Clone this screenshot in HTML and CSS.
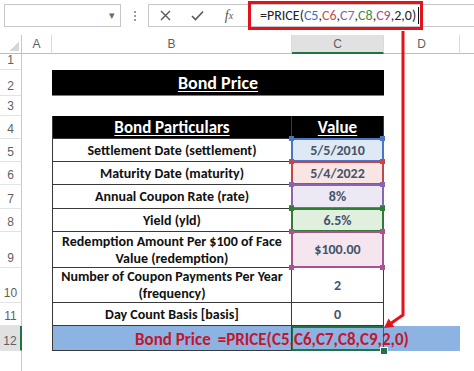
FILE: index.html
```html
<!DOCTYPE html>
<html lang="en">
<head>
  <meta charset="UTF-8" />
  <title>Bond Price - PRICE function</title>
  <link rel="stylesheet" href="styles.css">
</head>
<body>

  <div class="toolbar">
    <div class="namebox"><span class="drop">&#9662;</span></div>
    <div class="grip"></div>
    <div class="fbar">
      <span class="fbtn">
        <svg width="11" height="11" viewBox="0 0 11 11"><path d="M1 1L10 10M10 1L1 10" stroke="#595959" stroke-width="1.4" fill="none"/></svg>
      </span>
      <span class="fbtn">
        <svg width="13" height="11" viewBox="0 0 13 11"><path d="M1 6L4.5 9.5L12 1.5" stroke="#595959" stroke-width="1.6" fill="none"/></svg>
      </span>
      <span class="fbtn fx">f<small>x</small></span>
      <div class="finput">=PRICE(<span class="k1">C5</span>,<span class="k2">C6</span>,<span class="k3">C7</span>,<span class="k4">C8</span>,<span class="k5">C9</span>,2,0)<span class="cursor"></span></div>
    </div>
  </div>

  <div class="sheet">
    <!-- column headers -->
    <div class="corner"></div>
    <div class="ch col-a">A</div>
    <div class="ch col-b">B</div>
    <div class="ch col-c sel">C</div>
    <div class="ch col-d">D</div>
    <div class="ch col-e"></div>

    <div class="rh">1</div>

    <div class="rh">2</div>
    <div class="title"><u>Bond Price</u></div>

    <div class="rh">3</div>

    <div class="rh">4</div>
    <div class="t b head"><u>Bond Particulars</u></div>
    <div class="t c head"><u>Value</u></div>

    <div class="rh">5</div>
    <div class="t b">Settlement Date (settlement)</div>
    <div class="t c ref r-blue">5/5/2010</div>

    <div class="rh">6</div>
    <div class="t b">Maturity Date (maturity)</div>
    <div class="t c ref r-red">5/4/2022</div>

    <div class="rh">7</div>
    <div class="t b">Annual Coupon Rate (rate)</div>
    <div class="t c ref r-purple">8%</div>

    <div class="rh">8</div>
    <div class="t b">Yield (yld)</div>
    <div class="t c ref r-green">6.5%</div>

    <div class="rh">9</div>
    <div class="t b">Redemption Amount Per $100 of Face Value (redemption)</div>
    <div class="t c ref r-pink tall">$100.00</div>

    <div class="rh">10</div>
    <div class="t b">Number of Coupon Payments Per Year (frequency)</div>
    <div class="t c">2</div>

    <div class="rh">11</div>
    <div class="t b">Day Count Basis [basis]</div>
    <div class="t c">0</div>

    <div class="rh sel">12</div>
    <div class="t b result"><span class="label">Bond Price</span><span class="formula">=PRICE(C5,C6,C7,C8,C9,2,0)</span></div>
    <div class="t c result active"></div>
    <div class="d result"></div>

    <div class="rh last"></div>
  </div>

  <svg class="arrow" width="474" height="371" viewBox="0 0 474 371">
    <polyline points="403,31 403,315 391.4,322.9" stroke="#e3131b" stroke-width="3" fill="none"/>
    <polygon points="384,328 394.4,327 388.6,318.6" fill="#e3131b"/>
  </svg>

</body>
</html>
```

FILE: styles.css
```css
:root {
  --linha: #3a3a3a;
  --cabecalho: #5f5f5f;
  --valor: #44546a;
  --verde-excel: #217346;
  --vermelho: #e3131b;
  --azul-linha: #8db3e2;
}

* {
  box-sizing: border-box;
}

body {
  margin: 0;
  width: 474px;
  height: 371px;
  overflow: hidden;
  position: relative;
  background: #fff;
  font-family: "Carlito", "Lato", "Liberation Sans", sans-serif;
}

/* formula bar */
.toolbar {
  height: 35px;
  display: flex;
  align-items: flex-start;
  padding: 4px 0 0 4px;
}

.namebox {
  width: 117px;
  height: 23px;
  border: 1px solid #c6c6c6;
  display: flex;
  align-items: center;
  justify-content: flex-end;
  padding-right: 5px;
  color: #6a6a6a;
  font-size: 11px;
}

.grip {
  width: 2px;
  height: 12px;
  margin: 6px 0 0 13px;
  background: radial-gradient(circle, #9b9b9b 0.8px, transparent 1px) 0 0 / 2px 4px;
}

.fbar {
  flex: 1;
  height: 23px;
  margin-left: 12px;
  border: 1px solid #c6c6c6;
  border-right: none;
  display: flex;
  align-items: center;
}

.fbtn {
  width: 32px;
  display: flex;
  justify-content: center;
  align-items: center;
}

.fx {
  font-family: "Liberation Serif", serif;
  font-style: italic;
  font-size: 14px;
  color: #555;
}

.fx small {
  font-size: 10px;
}

.finput {
  width: 175px;
  height: 29px;
  margin-left: 3px;
  border: 3px solid var(--vermelho);
  padding-left: 9px;
  display: flex;
  align-items: center;
  font-size: 14px;
  color: #222;
  white-space: nowrap;
}

.k1 { color: #3b6fc2; }
.k2 { color: #c0504d; }
.k3 { color: #8064a2; }
.k4 { color: #3f8b3f; }
.k5 { color: #a14f8e; }

.cursor {
  width: 1px;
  height: 17px;
  margin-left: 2px;
  background: #111;
}

/* sheet */
.sheet {
  display: grid;
  grid-template-columns: 22px 30px 240px 92px 76px 1fr;
  grid-template-rows: 19px 16px 26px 20px 23px 23px 23px 24px 23px 36px 35px 23px 25px 1fr;
  height: 336px;
}

.corner {
  grid-column: 1;
  border-right: 1px solid #c8c8c8;
  border-bottom: 1px solid #bdbdbd;
  background: linear-gradient(to bottom right, transparent 55%, #d7d7d7 56%) no-repeat right 2px bottom 2px / 11px 11px;
}

.ch {
  border-right: 1px solid #dadada;
  border-bottom: 1px solid #bdbdbd;
  display: flex;
  align-items: center;
  justify-content: center;
  font-family: "Liberation Sans", sans-serif;
  font-size: 12px;
  color: var(--cabecalho);
}

.ch.sel {
  background: #e1e1e1;
  border-bottom: 2px solid var(--verde-excel);
}

.col-a { grid-column: 2; }
.col-b { grid-column: 3; }
.col-c { grid-column: 4; }
.col-d { grid-column: 5; }
.col-e { grid-column: 6; border-right: none; }

.rh {
  grid-column: 1;
  border-right: 1px solid #c8c8c8;
  border-bottom: 1px solid #e3e3e3;
  display: flex;
  align-items: flex-end;
  justify-content: center;
  padding-bottom: 2px;
  font-family: "Liberation Sans", sans-serif;
  font-size: 12px;
  color: var(--cabecalho);
}

.rh.sel {
  background: #e1e1e1;
  border-right: 2px solid var(--verde-excel);
}

.rh.last {
  border-bottom: none;
}

.title {
  grid-column: 3 / span 2;
  background: #000;
  border-bottom: 1px solid #7a7a7a;
  display: flex;
  align-items: center;
  justify-content: center;
  color: #fff;
  font-weight: 700;
  font-size: 18px;
}

.title u, .head u {
  text-underline-offset: 2px;
}

/* table */
.t {
  border-right: 1px solid var(--linha);
  border-bottom: 1px solid var(--linha);
  display: flex;
  align-items: center;
  justify-content: center;
  text-align: center;
  font-weight: 700;
  font-size: 14px;
  line-height: 17px;
  color: #111;
}

.b {
  grid-column: 3;
  border-left: 1px solid var(--linha);
  padding: 0 8px;
}

.c {
  grid-column: 4;
  color: var(--valor);
}

.d {
  grid-column: 5;
}

.head {
  background: #000;
  color: #fff;
  font-size: 17px;
}

.ref {
  position: relative;
  background: var(--fundo);
}

.ref::before {
  content: "";
  position: absolute;
  top: -1px;
  left: -1px;
  right: -1px;
  bottom: -1px;
  border: 2px solid var(--cor);
}

.ref::after {
  content: "";
  position: absolute;
  top: -3px;
  left: -3px;
  width: 5px;
  height: 5px;
  background: var(--cor);
  box-shadow: 91px 0 var(--cor), 0 var(--h) var(--cor), 91px var(--h) var(--cor);
}

.ref { --h: 23px; }
.ref.tall { --h: 36px; }

.r-blue { --cor: #4a76c4; --fundo: #dfe8f5; }
.r-red { --cor: #c0474b; --fundo: #f9e5e4; }
.r-purple { --cor: #8a65ad; --fundo: #ece8f4; }
.r-green { --cor: #2f7d34; --fundo: #e1efdf; }
.r-pink { --cor: #a8528f; --fundo: #f4e5ef; }

.result {
  background: var(--azul-linha);
}

.b.result {
  z-index: 1;
  justify-content: flex-start;
  padding-left: 82px;
  padding-top: 2px;
  white-space: nowrap;
  font-size: 17px;
  color: #c3162f;
}

.result .formula {
  margin-left: 7px;
}

.c.result.active {
  position: relative;
  border-right: none;
  border-bottom: none;
  box-shadow: inset 0 1px 0 1px var(--verde-excel), inset 0 -2px 0 0 var(--verde-excel);
}

.c.result.active::after {
  content: "";
  position: absolute;
  right: -4px;
  bottom: -4px;
  width: 6px;
  height: 6px;
  background: var(--verde-excel);
  border: 1px solid #fff;
}

.arrow {
  position: absolute;
  top: 0;
  left: 0;
  pointer-events: none;
}
```
